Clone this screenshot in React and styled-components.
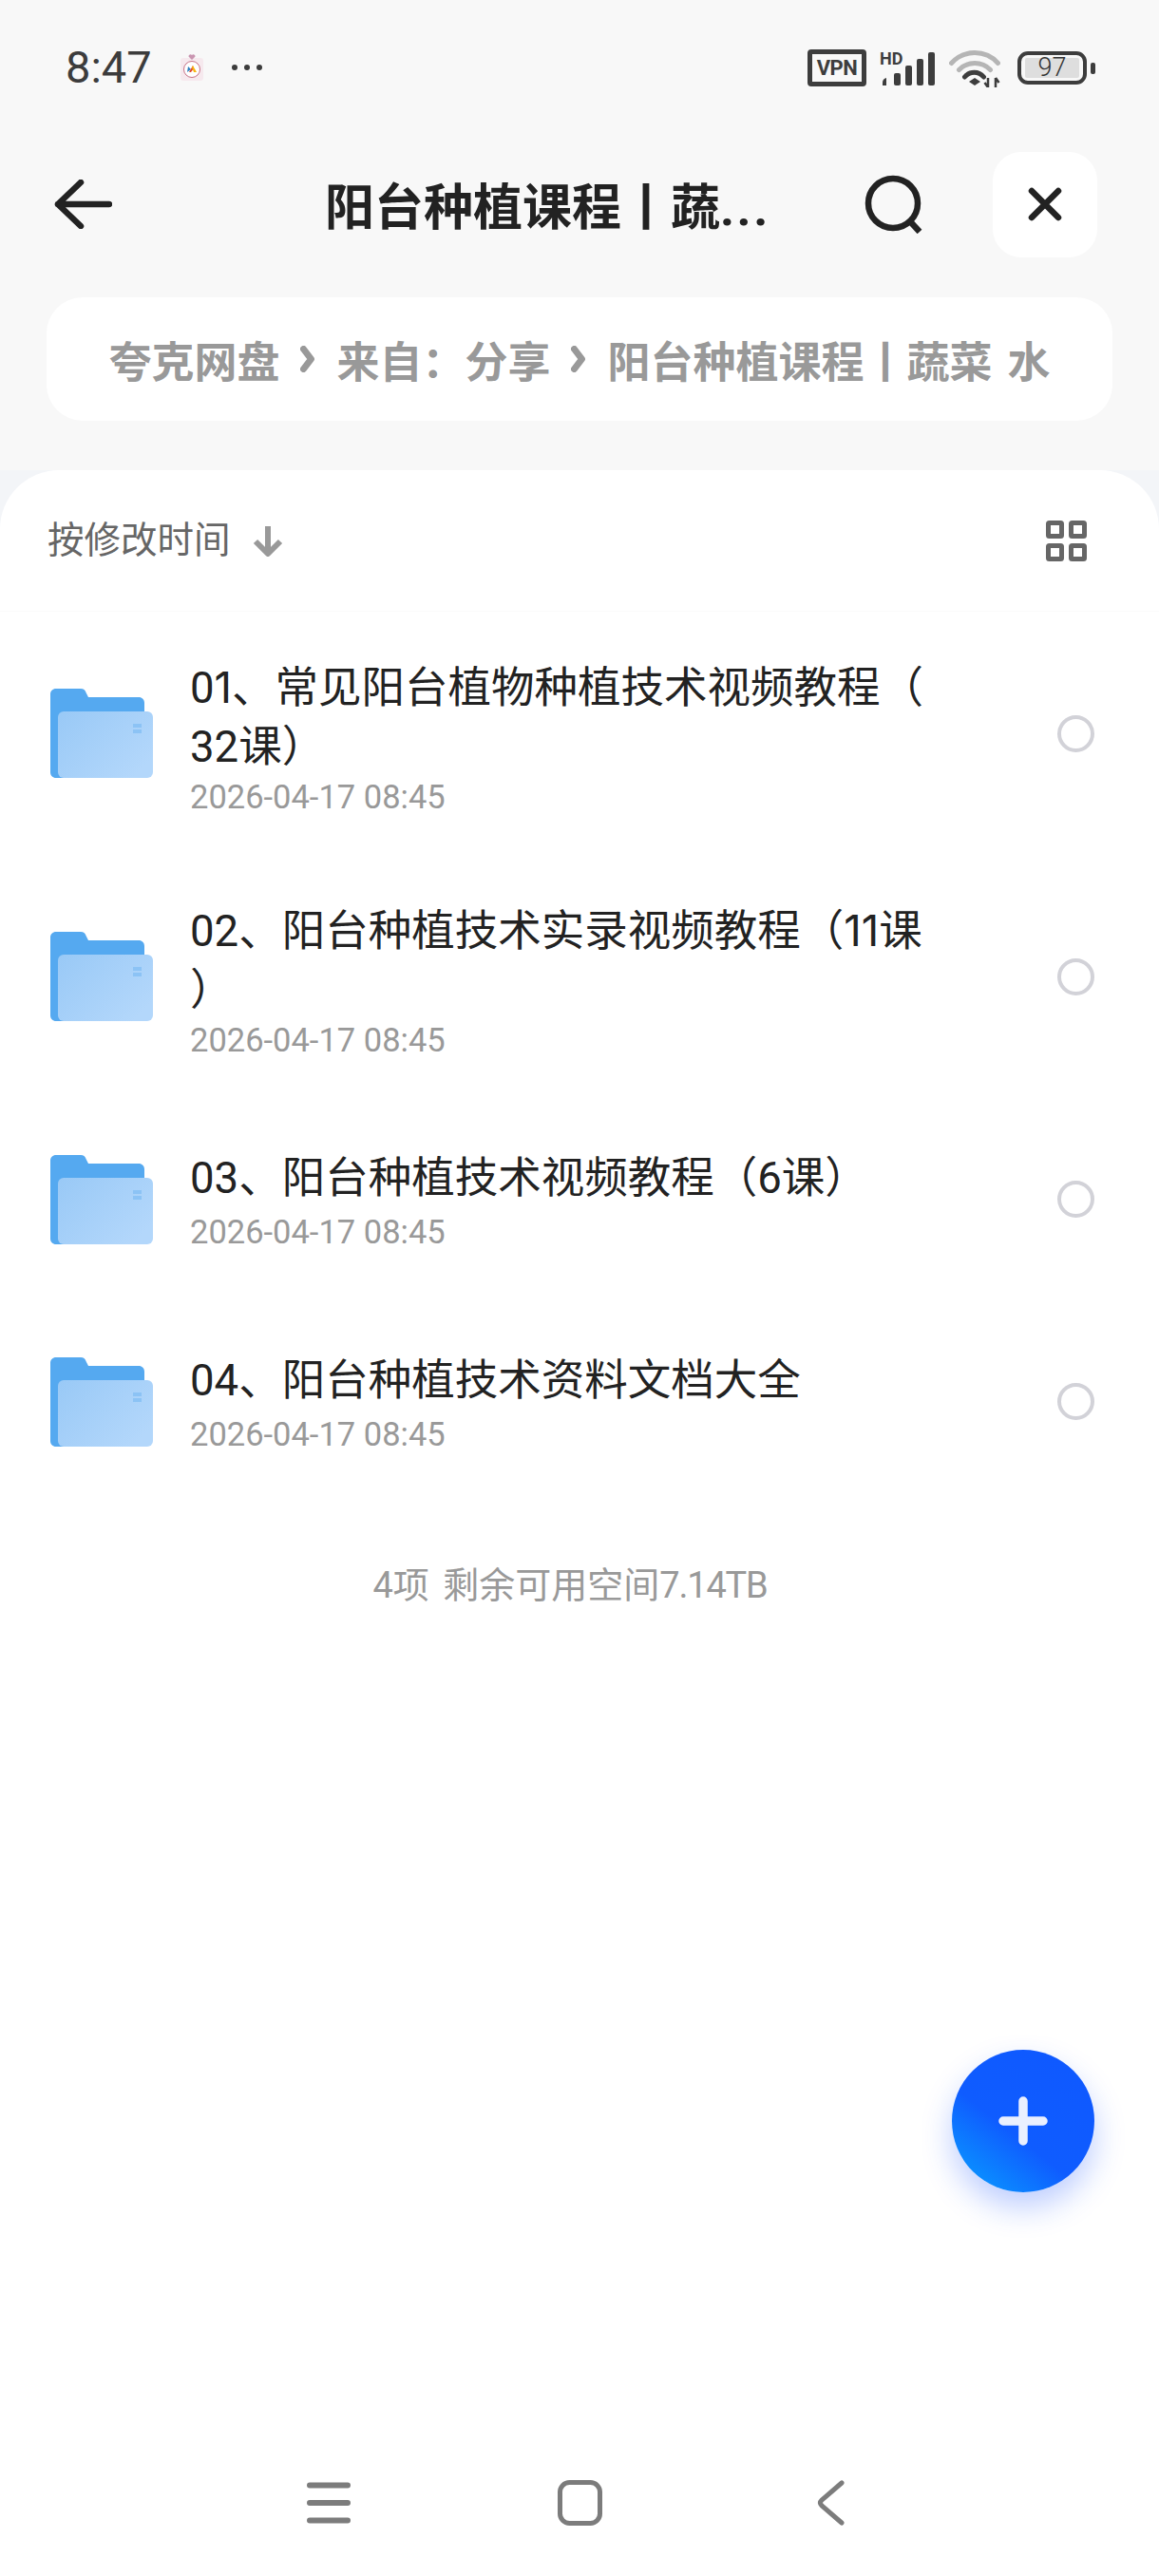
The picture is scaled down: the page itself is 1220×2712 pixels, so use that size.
import React from "react";
import styled, { createGlobalStyle } from "styled-components";

const GlobalStyle = createGlobalStyle`
  html, body {
    margin: 0;
    padding: 0;
    width: 1220px;
    height: 2712px;
    overflow: hidden;
    background: #f8f8f8;
    font-family: Roboto, "Noto Sans CJK SC", sans-serif;
  }
`;

const Page = styled.div`
  display: flex;
  flex-direction: column;
  width: 1220px;
  height: 2712px;
  background: #f8f8f8;
`;

const StatusBar = styled.div`
  display: flex;
  align-items: center;
  height: 142px;
  padding: 0 68px 0 69px;
  box-sizing: border-box;
`;

const Time = styled.span`
  font-size: 47px;
  line-height: 46px;
  color: #3c3c3c;
  margin-right: 30px;
`;

const StatusRight = styled.div`
  display: flex;
  align-items: center;
  margin-left: auto;
`;

const VpnBadge = styled.span`
  display: flex;
  align-items: center;
  justify-content: center;
  box-sizing: border-box;
  width: 62px;
  height: 39px;
  border: 5px solid #3d3d3d;
  border-radius: 4px;
  font-size: 22px;
  font-weight: 700;
  letter-spacing: -0.5px;
  color: #3d3d3d;
  margin-right: 14px;
`;

const Battery = styled.span`
  position: relative;
  display: flex;
  align-items: center;
  justify-content: center;
  box-sizing: border-box;
  width: 73px;
  height: 35px;
  border: 4px solid #3d3d3d;
  border-radius: 11px;
  margin: 0 8px 0 18px;

  &::after {
    content: "";
    position: absolute;
    right: -13px;
    top: 8px;
    width: 5px;
    height: 12px;
    border-radius: 2px;
    background: #3d3d3d;
  }
`;

const BatteryFill = styled.span`
  display: flex;
  align-items: center;
  justify-content: center;
  width: 57px;
  height: 21px;
  background: #dedede;
  border-radius: 2px;
  font-size: 27px;
  line-height: 21px;
  font-weight: 300;
  color: #333;
`;

const Header = styled.div`
  display: flex;
  align-items: center;
  height: 146px;
  padding: 0 65px 0 57px;
  box-sizing: border-box;
`;

const Title = styled.h1`
  margin: 10px 0 0 224px;
  width: 570px;
  font-size: 52px;
  line-height: 60px;
  font-weight: 700;
  color: #222;
  white-space: nowrap;
`;

const TitleDots = styled.span`
  letter-spacing: 2.5px;
`;

const CloseButton = styled.div`
  display: flex;
  align-items: center;
  justify-content: center;
  width: 110px;
  height: 111px;
  margin-left: auto;
  border-radius: 30px;
  background: #fff;
`;

const Breadcrumb = styled.div`
  display: flex;
  align-items: center;
  justify-content: center;
  gap: 22px;
  box-sizing: border-box;
  height: 130px;
  margin: 25px 49px 52px;
  border-radius: 38px;
  background: #fff;
  font-size: 45px;
  font-weight: 700;
  word-spacing: 5px;
  color: #999;
  white-space: nowrap;
`;

const SheetBackdrop = styled.div`
  flex: 1;
  display: flex;
  background: #f3f5f8;
`;

const Sheet = styled.div`
  position: relative;
  flex: 1;
  display: flex;
  flex-direction: column;
  background: #fff;
  border-radius: 62px 62px 0 0;
`;

const SortBar = styled.div`
  display: flex;
  align-items: center;
  height: 149px;
  padding: 0 76px 0 50px;
  border-bottom: 1px solid #fafafa;
  box-sizing: border-box;
`;

const SortLabel = styled.span`
  font-size: 38.5px;
  line-height: 46px;
  margin-top: -1px;
  margin-right: 23px;
  color: #666;
`;

const GridIcon = styled.svg`
  margin-left: auto;
`;

const Row = styled.div`
  display: flex;
  align-items: center;
  box-sizing: border-box;
  min-height: 213px;
  padding: 41.5px 68px 41.5px 53px;
`;

const RowText = styled.div`
  width: 790px;
  margin-left: 39px;
  padding-top: ${(props) => (props.$wrapped ? "8px" : "0")};
`;

const RowTitle = styled.div`
  font-size: 45.5px;
  line-height: ${(props) => (props.$wrapped ? "62px" : "63px")};
  margin-bottom: ${(props) => (props.$wrapped ? "-4px" : "0")};
  color: #222;
  white-space: nowrap;
`;

// the digit 1 is narrow in the reference font, Inter has the closest one
const NarrowDigits = styled.span`
  font-family: Inter, Roboto, sans-serif;
  line-height: 0;
`;

const RowDate = styled.div`
  margin-top: 5px;
  font-size: 34.5px;
  line-height: 40px;
  color: #999;
`;

const Radio = styled.span`
  width: 39px;
  height: 39px;
  margin-left: auto;
  box-sizing: border-box;
  border: 4px solid #d2d2d8;
  border-radius: 50%;
`;

const Summary = styled.div`
  height: 174px;
  padding-right: 20px;
  font-size: 38px;
  line-height: 174px;
  word-spacing: 5px;
  color: #999;
  text-align: center;
`;

const SummaryFigure = styled.span`
  letter-spacing: -1.2px;
`;

const Fab = styled.div`
  position: absolute;
  right: 68px;
  top: 1663px;
  display: flex;
  align-items: center;
  justify-content: center;
  width: 150px;
  height: 150px;
  border-radius: 50%;
  background: linear-gradient(38deg, #0a96ff 8%, #0f5cff 42%, #0f58ff 100%);
  box-shadow: 0 16px 32px rgba(20, 80, 255, 0.28);
`;

const NavBar = styled.div`
  display: grid;
  grid-template-columns: repeat(3, 264px);
  justify-content: center;
  justify-items: center;
  align-items: center;
  height: 154px;
  margin-top: auto;
`;

function FolderIcon() {
  return (
    <svg width="108" height="94" viewBox="0 0 108 94" style={{ flex: "none" }}>
      <defs>
        <linearGradient id="folderFront" x1="0" y1="0" x2="1" y2="0.7">
          <stop offset="0" stopColor="#99c9f6" />
          <stop offset="1" stopColor="#b3d7fb" />
        </linearGradient>
      </defs>
      <path
        d="M6 0h26c3 0 4.500 1.500 5.500 4l2.500 5h53c3.500 0 6 2.500 6 6v70c0 5-3 9-8 9H6c-3.500 0-6-2.500-6-6V6c0-3.500 2.500-6 6-6z"
        fill="#55a9f0"
      />
      <rect x="8" y="24" width="100" height="70" rx="6" fill="url(#folderFront)" />
      <rect x="87" y="37" width="9" height="4" fill="#8cc3f5" />
      <rect x="87" y="43" width="9" height="4" fill="#8cc3f5" />
    </svg>
  );
}

function Chevron() {
  return (
    <svg width="16" height="28" viewBox="0 0 16 28">
      <path d="M3.500 3.500l8 10.500-8 10.500" fill="none" stroke="#999" strokeWidth="7" strokeLinecap="round" strokeLinejoin="round" />
    </svg>
  );
}

function NotifyIcon() {
  return (
    <svg width="24" height="28" viewBox="0 0 24 28" style={{ marginRight: 30 }}>
      <rect x="0" y="4" width="24" height="24" rx="3" fill="#f6e9ee" />
      <path d="M12 6l-3.500-3.500a2 2 0 0 1 3.500-1.500a2 2 0 0 1 3.500 1.500z" fill="#c995b0" />
      <circle cx="12" cy="16" r="8.500" fill="#fff" stroke="#b9506a" strokeWidth="0.8" />
      <path d="M7 19l1-6 3 3z" fill="#2d7fc1" />
      <path d="M9 19l4-7 1 3-3 4z" fill="#e2452a" />
      <path d="M13 12l4 7h-3l-2-5z" fill="#f6b511" />
    </svg>
  );
}

function MoreDots() {
  return (
    <svg width="32" height="6" viewBox="0 0 32 6">
      <circle cx="3" cy="3" r="3" fill="#3c3c3c" />
      <circle cx="16" cy="3" r="3" fill="#3c3c3c" />
      <circle cx="29" cy="3" r="3" fill="#3c3c3c" />
    </svg>
  );
}

function SignalIcon() {
  return (
    <svg width="58" height="39" viewBox="0 0 58 39">
      <text x="0" y="16" fontSize="18" fontWeight="700" fontFamily="Roboto, sans-serif" fill="#3d3d3d">
        HD
      </text>
      <path d="M3 38v-3q0-4 4-5v8z" fill="#3d3d3d" />
      <rect x="15" y="25" width="7" height="13" rx="2" fill="#3d3d3d" />
      <rect x="27" y="17" width="7" height="21" rx="2" fill="#3d3d3d" />
      <rect x="39" y="10" width="7" height="28" rx="2" fill="#3d3d3d" />
      <rect x="51" y="3" width="7" height="35" rx="2" fill="#3d3d3d" />
    </svg>
  );
}

function WifiIcon() {
  return (
    <svg width="54" height="41" viewBox="0 0 54 41" style={{ marginLeft: 15 }}>
      <path d="M2.500 15.500a33 33 0 0 1 49 0" fill="none" stroke="#b5b5b5" strokeWidth="5" strokeLinecap="round" />
      <path d="M10.500 22.500a23 23 0 0 1 33 0" fill="none" stroke="#b5b5b5" strokeWidth="5" strokeLinecap="round" />
      <path d="M16.500 30a13 13 0 0 1 20 0" fill="none" stroke="#3d3d3d" strokeWidth="5" strokeLinecap="round" />
      <path d="M27 31l6 4-6 4-6-4z" fill="#3d3d3d" />
      <path d="M41 31v10M37.500 36l3.500 5" fill="none" stroke="#3d3d3d" strokeWidth="2.500" />
      <path d="M49 41v-10M52.500 36l-3.500-5" fill="none" stroke="#3d3d3d" strokeWidth="2.500" />
    </svg>
  );
}

const rows = [
  {
    id: 1,
    wrapped: true,
    title: (
      <>
        0<NarrowDigits>1</NarrowDigits>、常见阳台植物种植技术视频教程（
        <br />
        32课）
      </>
    ),
  },
  {
    id: 2,
    wrapped: true,
    title: (
      <>
        02、阳台种植技术实录视频教程（<NarrowDigits>11</NarrowDigits>课
        <br />）
      </>
    ),
  },
  { id: 3, wrapped: false, title: "03、阳台种植技术视频教程（6课）" },
  { id: 4, wrapped: false, title: "04、阳台种植技术资料文档大全" },
];

function App() {
  return (
    <Page>
      <GlobalStyle />
      <StatusBar>
        <Time>8:47</Time>
        <NotifyIcon />
        <MoreDots />
        <StatusRight>
          <VpnBadge>VPN</VpnBadge>
          <SignalIcon />
          <WifiIcon />
          <Battery>
            <BatteryFill>97</BatteryFill>
          </Battery>
        </StatusRight>
      </StatusBar>

      <Header>
        <svg width="61" height="52" viewBox="0 0 61 52">
          <path d="M28 3L4 26l24 23M4 26h54" fill="none" stroke="#222" strokeWidth="6.500" strokeLinecap="round" strokeLinejoin="round" />
        </svg>
        <Title>
          阳台种植课程丨蔬<TitleDots>...</TitleDots>
        </Title>
        <svg width="62" height="62" viewBox="0 0 62 62" style={{ marginLeft: -2 }}>
          <circle cx="30" cy="30" r="26" fill="none" stroke="#222" strokeWidth="6.500" />
          <path d="M46 47l12 13" fill="none" stroke="#222" strokeWidth="6.500" />
        </svg>
        <CloseButton>
          <svg width="36" height="36" viewBox="0 0 36 36">
            <path d="M4 4l28 28M32 4L4 32" fill="none" stroke="#222" strokeWidth="6.500" strokeLinecap="round" />
          </svg>
        </CloseButton>
      </Header>

      <Breadcrumb>
        <span>夸克网盘</span>
        <Chevron />
        <span>来自：分享</span>
        <Chevron />
        <span>阳台种植课程丨蔬菜 水</span>
      </Breadcrumb>

      <SheetBackdrop>
        <Sheet>
          <SortBar>
            <SortLabel>按修改时间</SortLabel>
            <svg width="32" height="34" viewBox="0 0 32 34">
              <path d="M16 2v28M3 18l13 13 13-13" fill="none" stroke="#999" strokeWidth="6" strokeLinejoin="round" />
            </svg>
            <GridIcon width="43" height="43" viewBox="0 0 43 43">
              <g fill="none" stroke="#666" strokeWidth="5">
                <rect x="2.500" y="2.500" width="14" height="14" rx="1" />
                <rect x="26.500" y="2.500" width="14" height="14" rx="1" />
                <rect x="2.500" y="26.500" width="14" height="14" rx="1" />
                <rect x="26.500" y="26.500" width="14" height="14" rx="1" />
              </g>
            </GridIcon>
          </SortBar>

          {rows.map((row) => (
            <Row key={row.id}>
              <FolderIcon />
              <RowText $wrapped={row.wrapped}>
                <RowTitle $wrapped={row.wrapped}>{row.title}</RowTitle>
                <RowDate>2026-04-17 08:45</RowDate>
              </RowText>
              <Radio />
            </Row>
          ))}

          <Summary>
            4项 剩余可用空间<SummaryFigure>7.14TB</SummaryFigure>
          </Summary>

          <Fab>
            <svg width="52" height="52" viewBox="0 0 52 52">
              <path d="M26 5v42M5 26h42" fill="none" stroke="#eaf0ff" strokeWidth="9.500" strokeLinecap="round" />
            </svg>
          </Fab>

          <NavBar>
            <svg width="46" height="44" viewBox="0 0 46 44">
              <path d="M3 3.500h40M3 22h40M3 40.500h40" fill="none" stroke="#7c7c7c" strokeWidth="6" strokeLinecap="round" />
            </svg>
            <svg width="47" height="48" viewBox="0 0 47 48">
              <rect x="2.500" y="2.500" width="42" height="43" rx="10" fill="none" stroke="#7c7c7c" strokeWidth="5" />
            </svg>
            <svg width="29" height="48" viewBox="0 0 29 48">
              <path d="M26 3L5 21q-3 3 0 6l21 18" fill="none" stroke="#7c7c7c" strokeWidth="5" strokeLinecap="round" />
            </svg>
          </NavBar>
        </Sheet>
      </SheetBackdrop>
    </Page>
  );
}

export default App;
